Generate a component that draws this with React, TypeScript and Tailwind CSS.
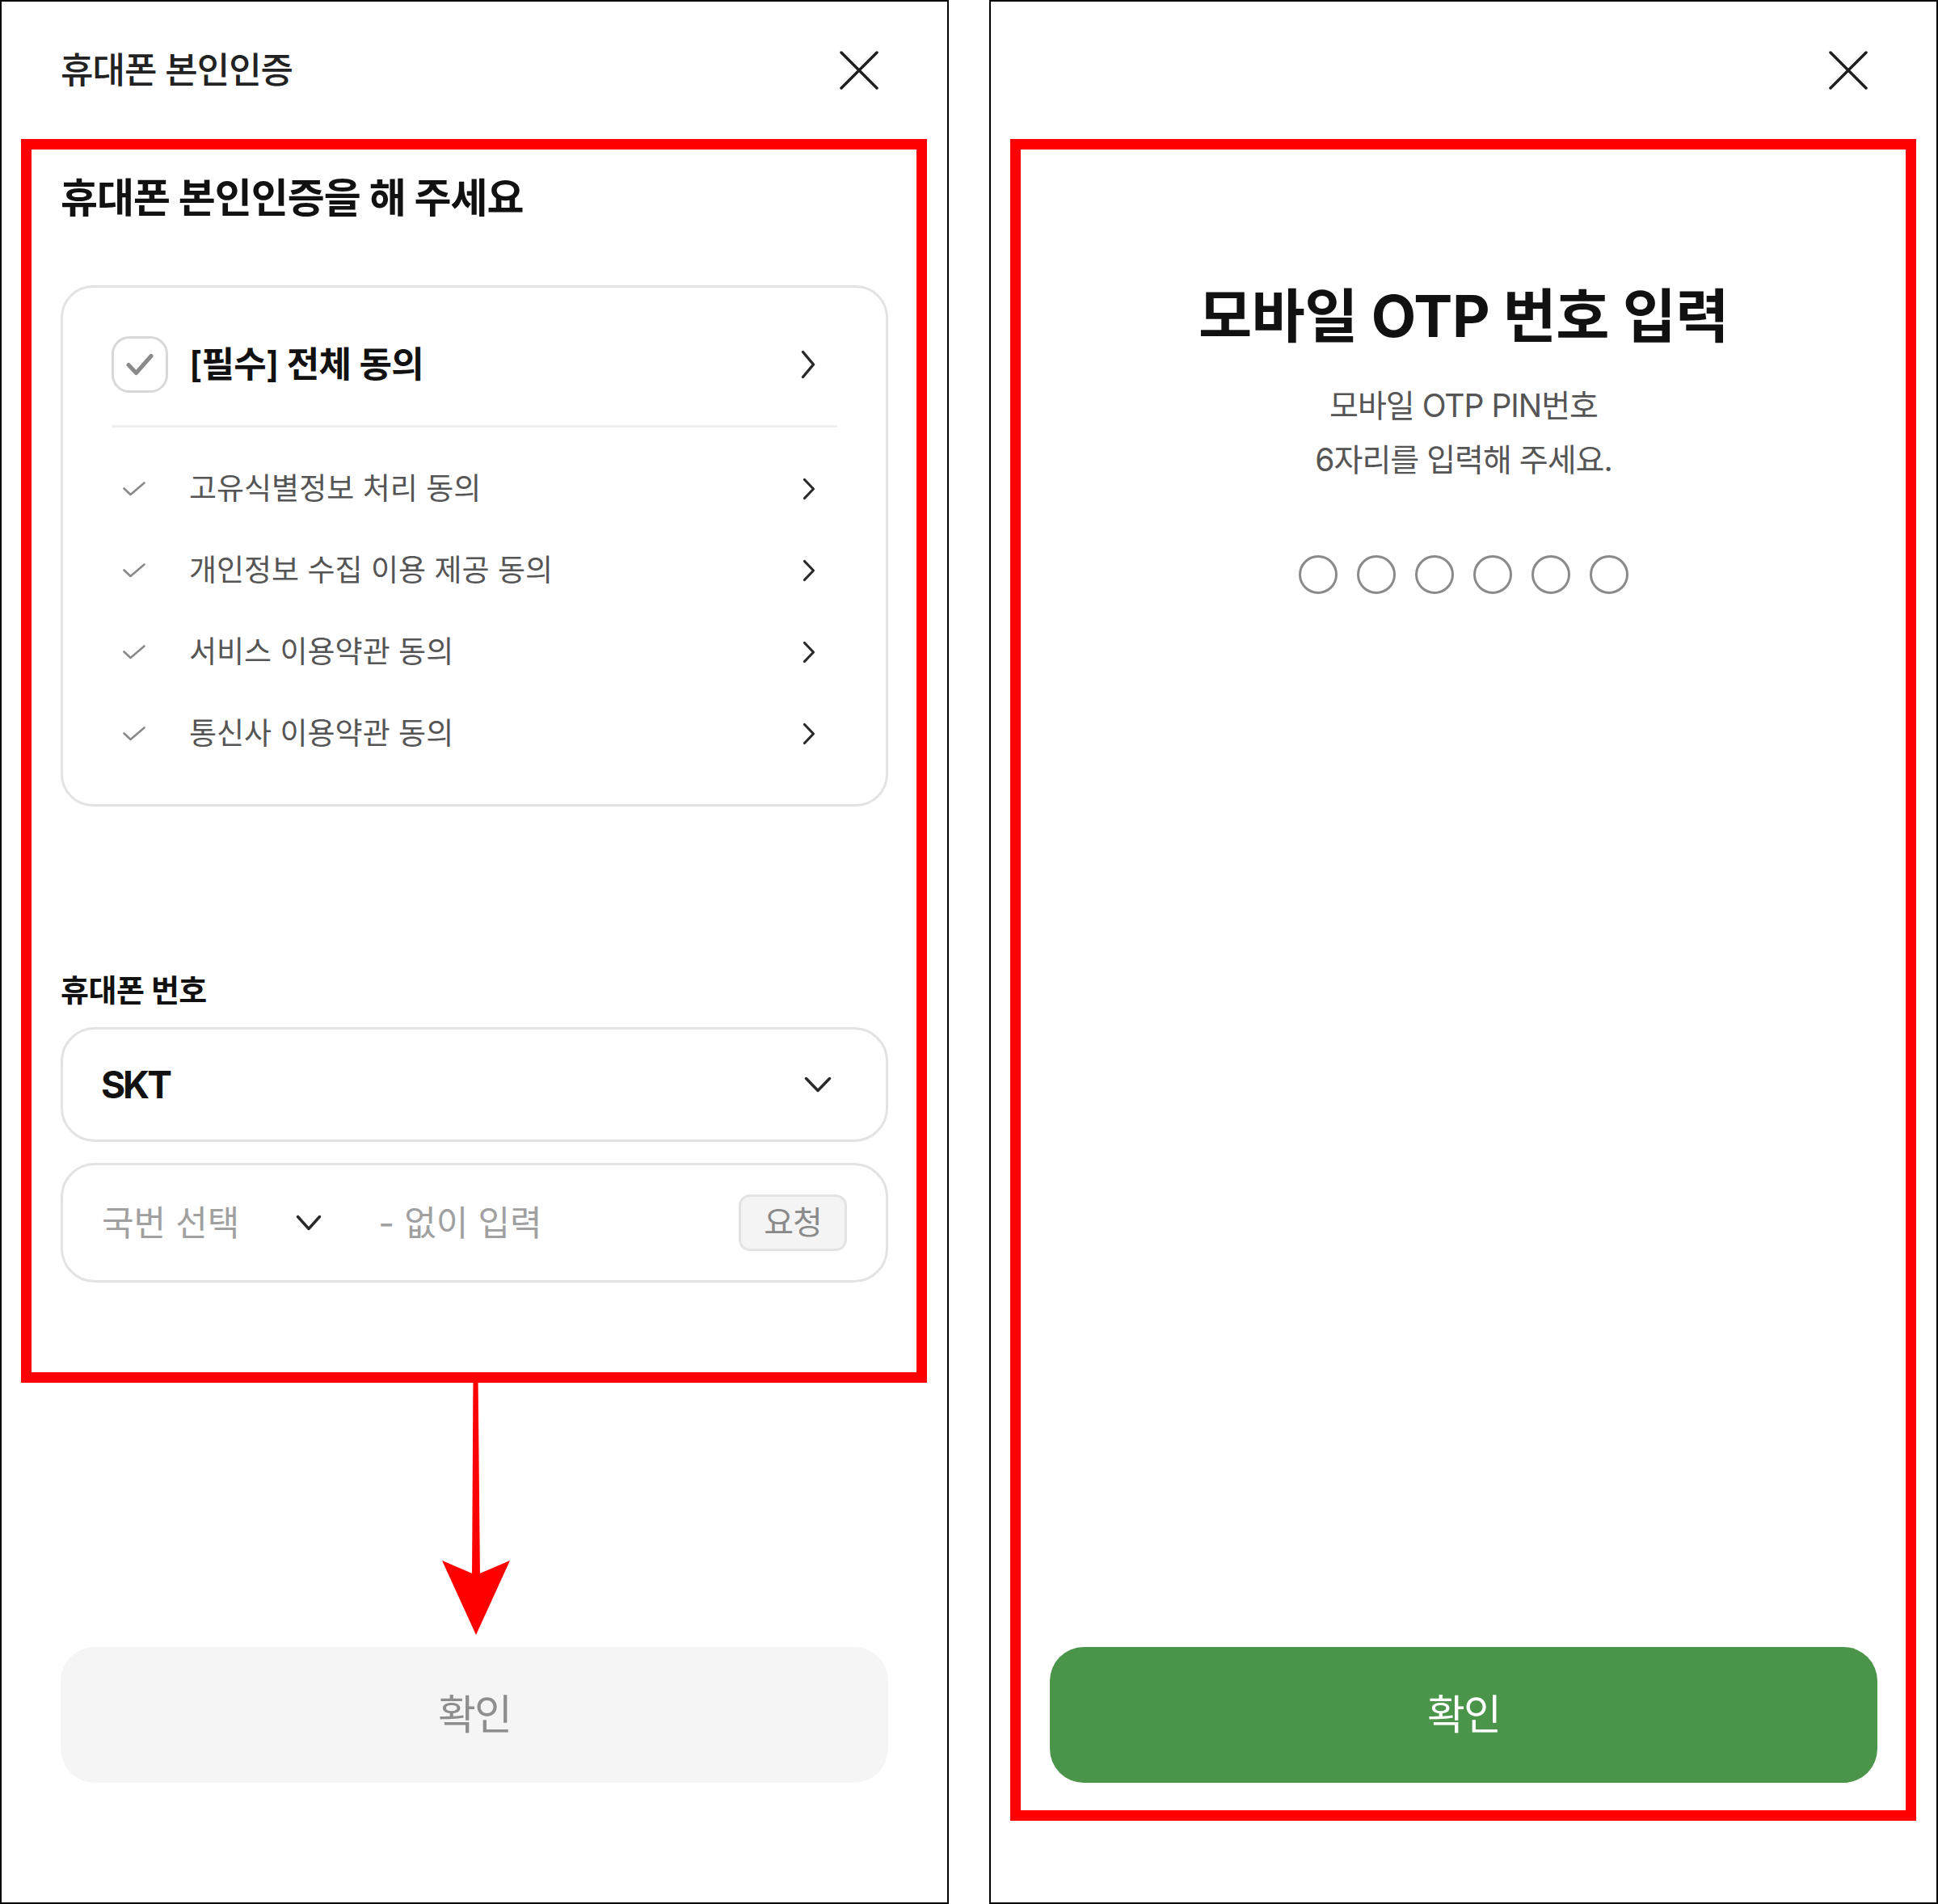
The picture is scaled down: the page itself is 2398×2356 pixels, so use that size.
import React from "react";

function CloseIcon() {
  return (
    <svg width="48" height="48" viewBox="0 0 48 48" fill="none">
      <path d="M2 2 L46 46 M46 2 L2 46" stroke="#1e1e1e" strokeWidth="3.5" strokeLinecap="round" />
    </svg>
  );
}

function ChevronRight({ big }: { big?: boolean }) {
  if (big) {
    return (
      <svg width="18" height="36" viewBox="0 0 18 36" fill="none">
        <path d="M2.5 2.5 L15.5 18 L2.5 33.5" stroke="#2a2a2a" strokeWidth="3.5" strokeLinecap="round" strokeLinejoin="round" />
      </svg>
    );
  }
  return (
    <svg width="16" height="28" viewBox="0 0 16 28" fill="none">
      <path d="M2.5 2.5 L13.5 14 L2.5 25.5" stroke="#2a2a2a" strokeWidth="3.2" strokeLinecap="round" strokeLinejoin="round" />
    </svg>
  );
}

function ChevronDown({ w, h }: { w: number; h: number }) {
  return (
    <svg width={w} height={h} viewBox={`0 0 ${w} ${h}`} fill="none">
      <path
        d={`M2.5 2.5 L${w / 2} ${h - 2.5} L${w - 2.5} 2.5`}
        stroke="#2a2a2a"
        strokeWidth="3.5"
        strokeLinecap="round"
        strokeLinejoin="round"
      />
    </svg>
  );
}

function SmallCheck() {
  return (
    <svg width="28" height="18" viewBox="0 0 28 18" fill="none">
      <path d="M1.5 8.5 L9.5 16 L26.5 1.5" stroke="#8a8a8a" strokeWidth="2.6" strokeLinecap="round" strokeLinejoin="round" />
    </svg>
  );
}

const subItems = ["고유식별정보 처리 동의", "개인정보 수집 이용 제공 동의", "서비스 이용약관 동의", "통신사 이용약관 동의"];

function LeftPanel() {
  return (
    <div className="relative w-[1174px] h-[2356px] shrink-0 border-2 border-black flex flex-col">
      <div className="h-[170px] shrink-0 flex items-center justify-between pl-[73px] pr-[85px]">
        <span className="text-[44px] leading-[60px] font-medium tracking-[-1px] text-[#222]">휴대폰 본인인증</span>
        <CloseIcon />
      </div>
      <div className="px-[73px] flex flex-col">
        <h1 className="mt-[36px] text-[50px] leading-[74px] font-bold tracking-[-1px] text-[#111]">
          휴대폰 본인인증을 해 주세요
        </h1>
        <div className="mt-[71px] border-[3px] border-[#e3e3e3] rounded-[40px] px-[60px] pt-[60px] pb-[37px]">
          <div className="h-[70px] flex items-center pr-[27px]">
            <div className="w-[70px] h-[70px] shrink-0 rounded-[22px] border-[3px] border-[#d8d8d8] flex items-center justify-center">
              <svg width="34" height="28" viewBox="0 0 34 28" fill="none">
                <path d="M3 14.5 L12.5 24.5 L31 3.5" stroke="#8a8a8a" strokeWidth="5" strokeLinecap="round" strokeLinejoin="round" />
              </svg>
            </div>
            <span className="ml-[26px] text-[44px] leading-[60px] font-semibold tracking-[-0.8px] text-[#111]">
              [필수] 전체 동의
            </span>
            <div className="flex-1" />
            <ChevronRight big />
          </div>
          <div className="mt-[40px] h-[3px] bg-[#efefef]" />
          <div className="mt-[25px] flex flex-col">
            {subItems.map((t) => (
              <div key={t} className="h-[101px] flex items-center pr-[27px]">
                <div className="w-[70px] shrink-0 pl-[14px] flex items-center">
                  <SmallCheck />
                </div>
                <span className="ml-[26px] text-[37px] leading-[50px] tracking-[0px] text-[#555]">{t}</span>
                <div className="flex-1" />
                <ChevronRight />
              </div>
            ))}
          </div>
        </div>

        <div className="mt-[197px] text-[38px] leading-[60px] font-bold tracking-[-0.5px] text-[#111]">휴대폰 번호</div>

        <div className="mt-[16px] h-[142px] border-[3px] border-[#e3e3e3] rounded-[42px] flex items-center pl-[47px] pr-[67px]">
          <span className="text-[46px] leading-[60px] font-bold tracking-[-3px] text-[#111]">SKT</span>
          <div className="flex-1" />
          <ChevronDown w={34} h={20} />
        </div>

        <div className="mt-[26px] h-[148px] border-[3px] border-[#e3e3e3] rounded-[42px] flex items-center pl-[48px] pr-[48px]">
          <span className="text-[43px] leading-[60px] tracking-[0px] text-[#a0a0a0]">국번 선택</span>
          <div className="ml-[70px]">
            <ChevronDown w={32} h={20} />
          </div>
          <span className="ml-[70px] text-[43px] leading-[60px] tracking-[0px] text-[#a0a0a0]">- 없이 입력</span>
          <div className="flex-1" />
          <div className="w-[134px] h-[70px] rounded-[14px] border-[3px] border-[#e3e3e3] bg-[#f4f4f4] flex items-center justify-center">
            <span className="text-[40px] leading-[50px] tracking-[-1px] text-[#8a8a8a]">요청</span>
          </div>
        </div>
      </div>
      <div className="flex-1" />
      <div className="mx-[73px] mb-[148px] h-[168px] shrink-0 rounded-[42px] bg-[#f5f5f5] flex items-center justify-center">
        <span className="text-[51px] leading-[60px] tracking-[-2px] text-[#8e8e8e]">확인</span>
      </div>

      <div className="absolute left-[24px] top-[170px] w-[1121px] h-[1539px] border-[13px] border-[#ff0000] pointer-events-none" />
      <svg
        className="absolute left-[542px] top-[1700px]"
        width="90"
        height="330"
        viewBox="0 0 90 330"
        fill="none"
      >
        <polygon points="41.5,0 47.5,0 50,252 40,252" fill="#ff0000" />
        <polygon points="3,229 45,247 87,229 45,321" fill="#ff0000" />
      </svg>
    </div>
  );
}

function RightPanel() {
  return (
    <div className="relative w-[1174px] h-[2356px] shrink-0 border-2 border-black flex flex-col items-center">
      <div className="h-[170px] w-full shrink-0 flex items-center justify-end pr-[85px]">
        <CloseIcon />
      </div>
      <h1 className="mt-[171px] text-[72px] leading-[96px] font-bold tracking-[-0.5px] text-[#111]">모바일 OTP 번호 입력</h1>
      <p className="mt-[29px] text-[39px] leading-[67px] tracking-[-1px] text-[#555] text-center">
        모바일 OTP PIN번호
        <br />
        6자리를 입력해 주세요.
      </p>
      <div className="mt-[85px] flex gap-[24px]">
        {[0, 1, 2, 3, 4, 5].map((i) => (
          <div key={i} className="w-[48px] h-[48px] rounded-full border-[3px] border-[#8a8a8a]" />
        ))}
      </div>
      <div className="flex-1" />
      <div className="w-[1024px] mb-[148px] h-[168px] shrink-0 rounded-[42px] bg-[#4a9549] flex items-center justify-center">
        <span className="text-[51px] leading-[60px] tracking-[-2px] text-white">확인</span>
      </div>

      <div className="absolute left-[24px] top-[170px] w-[1121px] h-[2081px] border-[13px] border-[#ff0000] pointer-events-none" />
    </div>
  );
}

export default function App() {
  return (
    <div className="w-[2398px] h-[2356px] bg-white flex gap-[50px] font-['Inter','Noto_Sans_CJK_KR',sans-serif]">
      <LeftPanel />
      <RightPanel />
    </div>
  );
}
